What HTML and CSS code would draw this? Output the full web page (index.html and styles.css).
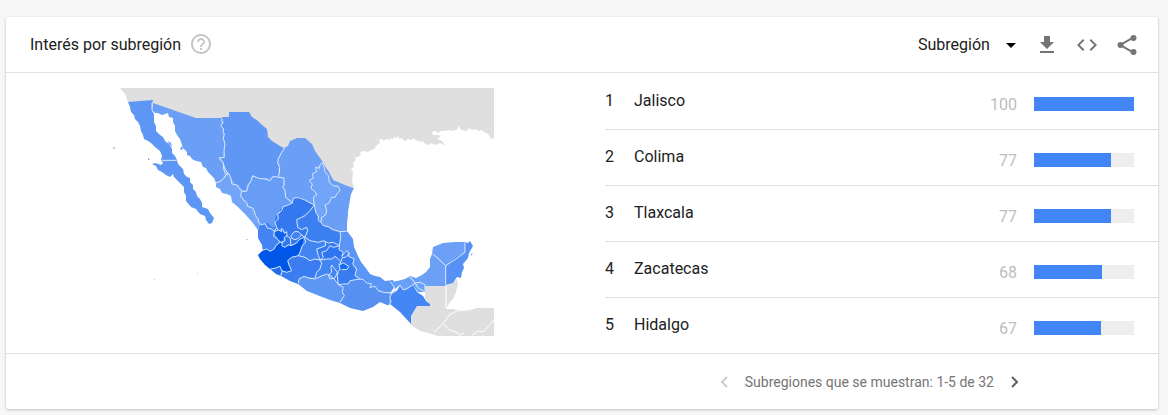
FILE: index.html
```
<!DOCTYPE html>
<html lang="es">
  <head>
    <meta charset="UTF-8" />
    <meta name="viewport" content="width=device-width, initial-scale=1.0" />
    <title>Interés por subregión</title>
    <link rel="stylesheet" href="styles.css">
  </head>
  <body>
    <section class="card">
      <header class="card-header">
        <h2 class="title">Interés por subregión</h2>
        <button class="icon-button help" aria-label="Ayuda">
          <svg viewBox="0 0 24 24" width="24" height="24" fill="currentColor">
            <path d="M11 18h2v-2h-2v2zm1-16C6.480 2 2 6.480 2 12s4.480 10 10 10 10-4.480 10-10S17.520 2 12 2zm0 18c-4.410 0-8-3.590-8-8s3.590-8 8-8 8 3.590 8 8-3.590 8-8 8zm0-14c-2.210 0-4 1.790-4 4h2c0-1.100.9-2 2-2s2 .9 2 2c0 2-3 1.750-3 5h2c0-2.250 3-2.500 3-5 0-2.210-1.790-4-4-4z" />
          </svg>
        </button>
        <div class="actions">
          <div class="resolution">
            <select class="resolution-select" aria-label="Resolución">
              <option>Subregión</option>
              <option>Ciudad</option>
            </select>
            <svg class="resolution-arrow" viewBox="0 0 10 5" width="10" height="5"><path d="M0 0h10L5 5z" /></svg>
          </div>
          <button class="icon-button" aria-label="Descargar CSV">
            <svg viewBox="0 0 24 24" width="24" height="24" fill="currentColor">
              <path d="M19 9h-4V3H9v6H5l7 7 7-7zM5 18v2h14v-2H5z" />
            </svg>
          </button>
          <button class="icon-button" aria-label="Insertar">
            <svg viewBox="0 0 24 24" width="24" height="24" fill="currentColor">
              <path d="M9.400 16.600L4.800 12l4.600-4.600L8 6l-6 6 6 6 1.400-1.400zm5.200 0l4.600-4.600-4.600-4.600L16 6l6 6-6 6-1.400-1.400z" />
            </svg>
          </button>
          <button class="icon-button" aria-label="Compartir">
            <svg viewBox="0 0 24 24" width="24" height="24" fill="currentColor">
              <path d="M4.500 11.200L18 3.600l1 1.700L7.200 12 19 18.700l-1 1.700L4.500 12.800z" />
              <circle cx="5.500" cy="12" r="3" />
              <circle cx="18.500" cy="5" r="3" />
              <circle cx="18.500" cy="19" r="3" />
            </svg>
          </button>
        </div>
      </header>

      <div class="content">
        <div class="map">
          <svg class="map-svg" viewBox="112 89 382 248" role="img" aria-label="Mapa de México">
            <!-- neighbours -->
            <g class="land">
              <path d="M120 89H494V140L490 139 489 136 487 134 485 134 482 131 479 132 475 130 472 131 469 129 467 132 462 131 460 130 459 126 457 131 450 132 449 131 445 132 441 132 438 134 435 132 432 133 433 136 439 136 440 138 437 140 442 142 444 145 446 147 440 144 435 146 431 144 429 146 425 145 423 142 420 143 418 141 416 142 414 139 411 141 408 140 405 142 401 139 398 140 399 137 396 139 394 138 392 141 391 138 390 141 386 140 384 142 382 140 379 141 380 144 377 146 374 150 367 153 364 152 360 153 361 156 358 158 355 158 356 161 353 164 354 168 351 170 353 173 352 183 354 188 340 190 280 152 222 122 190 121 153 106 128 103 125 95z" />
              <path d="M411 326L411 317 417 307 430 305 425 300 425 287H446L453 284 457 280 458 285 456 293 453 300 450 303 446 310 453 310 462 312 470 311 477 309H494V337H438L428 334 420 332z" />
            </g>
            <path class="frontier" d="M446 287V309M459 311L449 316 446 321 440 328 434 333M444 325L449 331 456 333 460 336 464 334M472 336L478 332 483 333 488 328 494 321" />

            <!-- states -->
            <g class="states">
              <path fill="#4c8bf3" d="M260 226L300 195 318 205 345 230 363 270 385 290 345 300 300 284 266 262z" />
              <path fill="#6b9ff6" d="M300 145L308 144 322 162 333 181 352 189 345 230 318 222z" />
              <path fill="#5d96f4" d="M128 103L153 101 152 105 152 112 154 115 154 123 156 127 156 132 160 136 163 138 165 142 169 145 172 150 172 154 175 157 177 161H161L162 157 160 152 155 148 151 144 148 142 144 140 143 136 141 132 140 127 138 123 135 120 134 116 131 113 130 108z" />
              <path fill="#5d96f4" d="M161 161H177L178 165 183 170 184 175 187 178 190 179 190 183 193 186 193 190 196 193 197 197 200 200 202 204 202 208 208 210 210 214 214 219 212 224 209 225 206 221 205 217 200 215 196 210 191 208 186 202 186 197 184 193 184 188 179 183 174 178 173 175 170 178 166 176 162 173 158 171 156 167 152 165 155 164 161 166 163 164z" />
              <path fill="#6b9ff6" d="M153 104L196 119H222L221 127 224 130 223 138 225 145 225 152 223 158 220 159 223 162 224 169 227 174 223 180 216 184 214 179 208 173 206 169 203 168 201 163 196 162 192 160 190 157 187 156 187 153 183 149 180 140 177 136 175 132 175 127 173 123 173 119 169 118 168 114 162 116 158 114 155 114 152 111z" />
              <path fill="#6097f4" d="M222 118H229V113H249L252 118 258 122 262 126 267 130 268 138 272 142 280 147 284 149 281 155 278 161 280 166 278 172 278 177 273 177 270 180 262 179 257 179 252 177 251 182 248 185 246 189 247 192 242 191 238 186 234 185 231 179 228 174 225 169 223 162 220 159 223 158 225 152 225 145 223 138 224 130 221 127z" />
              <path fill="#6b9ff6" d="M284 149L288 147 290 142 297 139H305L312 145 315 152 322 162 320 165 316 167 317 171 314 173 315 178 310 180 311 186 314 189 316 192 314 197 314 205 308 203 304 200 297 198 292 202 285 198 286 192 283 187 284 180 278 177 278 172 280 166 278 161 281 155z" />
              <path fill="#72a4f7" d="M320 165L323 167 326 175 328 181 332 185 338 187 338 192 334 195 334 199 329 200 325 204 328 208 327 213 323 217 322 227 318 220 316 212 314 205 313 197 315 192 314 189 311 186 310 180 315 178 314 173 317 171 316 167z" />
              <path fill="#6b9ff6" d="M322 162L325 168 329 173 333 181 338 186 346 187 354 189 352 193 350 197 348 205 348 215 347 225 347 233 340 233 332 231 329 229 321 225 323 217 327 213 328 208 325 204 329 200 334 199 334 195 338 192 338 187 332 185 328 181 326 175 323 167z" />
              <path fill="#72a4f7" d="M216 184L223 180 228 174 231 179 234 185 238 186 242 191 240 198 243 201 247 207 251 208 254 217 258 221 260 225 258 231 252 223 245 215 238 208 232 203 231 197 227 195 222 194 220 190 216 188z" />
              <path fill="#689df6" d="M242 191L247 192 246 189 248 185 251 182 252 177 257 179 262 179 270 180 273 177 278 177 284 180 283 187 286 192 285 198 292 202 289 207 280 210 280 214 276 217 275 223 276 228 272 228 268 224 260 225 258 221 254 217 251 208 247 207 243 201 240 198z" />
              <path fill="#4384f2" d="M260 225L268 224 272 228 274 233 275 238 280 240 284 244 280 248 270 252 263 253 262 246 258 239 258 231z" />
              <path fill="#3478ef" d="M275 233L275 223 276 217 280 214 280 210 286 207 292 204 293 199 300 198 308 203 314 206 308 213 298 220 297 229 303 230 307 229 306 238 298 240 294 245 288 249 280 246 282 235z" />
              <path fill="#3c7ff1" d="M314 206L316 213 318 218 322 225 329 229 332 232 340 233 341 240 339 247 332 245 326 243 321 244 315 242 304 239 307 230 297 228 297 221 305 216z" />
              <path fill="#4083f1" d="M291 237L294 233 298 233 302 236 298 239 292 240z" />
              <path fill="#0057e7" d="M258 256L263 251 267 250 270 252 274 250 276 247 280 243 283 246 285 248 291 247 297 243 300 239 304 238 305 243 302 247 300 253 298 257 292 258 288 262 289 267 292 272 287 273 282 272 280 267 275 269 270 270 265 266 260 260z" />
              <path fill="#0f62ea" d="M274 233L278 231 282 233 287 234 285 238 282 242 278 241z" />
              <path fill="#216ced" d="M270 270L275 269 280 267 282 272 281 277 276 275z" />
              <path fill="#4284f2" d="M304 238L315 242 325 242 326 247 317 250 318 257 320 261 315 260 310 262 305 259 298 257 300 253 302 247z" />
              <path fill="#3479ef" d="M325 242L333 244 339 247 330 247 327 252 322 253 323 258 320 261 318 257 317 250 326 247z" />
              <path fill="#2f75ef" d="M327 252L330 247 339 246 339 251 343 253 346 253 342 258 341 263 335 257 332 260 320 261 323 258 322 253z" />
              <path fill="#3b7df0" d="M298 257L305 259 310 262 315 260 320 261 322 264 320 270 317 273 315 279 308 279 304 277 299 280 298 285 290 282 281 277 282 272 287 273 292 272 288 262 292 258z" />
              <path fill="#4385f2" d="M320 261L332 260 335 257 341 263 340 268 338 272 338 275 335 279 332 277 327 275 315 279 317 273 320 270 322 264z" />
              <path fill="#397cf0" d="M342 258L346 253 350 258 355 260 353 267 357 272 355 277 360 280 350 282 348 285 338 286 332 278 337 275 338 272z" />
              <path fill="#176aed" d="M339 266L343 264 349 267 347 271 342 271z" />
              <path fill="#5b95f5" d="M341 233L347 232 353 240 354 248 358 257 361 263 365 268 370 275 375 277 380 278 385 282 393 281 395 287 391 293 386 294 380 292 376 290 373 290 373 286 368 284 366 281 359 280 355 277 357 272 353 267 355 260 350 258 347 253 341 252 339 247z" />
              <path fill="#5e96f4" d="M298 285L299 280 304 277 315 279 327 275 332 278 338 286 343 288 342 293 344 297 340 304 330 301 317 296 307 292z" />
              <path fill="#5790f0" d="M338 286L348 285 350 282 360 280 363 281 367 284 372 285 370 288 375 287 378 292 383 293 391 294 389 299 390 306 387 306 380 303 373 308 363 312 350 309 340 304 344 297 342 293 343 288z" />
              <path fill="#4486f4" d="M391 294L397 291 400 286 403 291 413 286 417 293 423 297 426 302 430 305 430 307H417L414 312 411 317 411 325 400 313 390 305 389 299z" />
              <path fill="#68a0f7" d="M390 283L397 282 405 280 410 277 413 280 414 284 419 286 425 286V293H418L413 286 403 291 400 286 395 290z" />
              <path fill="#6ca0f7" d="M410 277L416 279 422 276 426 273 430 268 430 260 432 255 438 260 446 267V287H425L419 286 414 284 413 280z" />
              <path fill="#6ca0f7" d="M432 255L433 248 443 244 455 243 465 243 465 253 458 256 452 260 446 267 438 260z" />
              <path fill="#5891f5" d="M465 243L468 244 470 242 473 247 469 254 468 259 463 265 464 269 462 273 461 279 457 278 453 284 446 286V267L452 260 458 256 465 253z" />
            </g>

            <!-- state lines, drawn on a grid three times finer -->
            <g class="state-lines" transform="translate(105 80) scale(.33333)">
              <path d="M141 72V94M170 244H215M352 118L350 125 355 129 347 140 356 150 354 157 358 165 355 178 360 195 357 215 358 235 342 237 350 247 356 255 355 268 362 286" />
              <path d="M332 312L345 308 355 300 362 288 372 284 378 300 381 315 395 318 402 328 410 337 425 337 430 318 437 308 443 290 460 298 480 300 495 305 505 292 520 295 537 297" />
              <path d="M539 207L530 220 520 238 518 252 524 265 523 282 520 293M537 297L537 318 533 325 540 335 542 355 555 366 562 372 565 357 580 356 598 362 612 370 628 378" />
              <path d="M410 337L407 350 415 362 425 370 428 382 445 388 452 410 460 420 460 430 468 437 480 434 487 447 500 450 508 458M562 372L545 380 535 382 530 395 518 405 520 420 510 430 515 445 508 458" />
              <path d="M652 250L645 258 643 268 632 265 635 278 622 285 625 297 612 305 622 315 618 328 632 340 635 348 625 355 628 378 632 400 640 412 640 425 648 430" />
              <path d="M652 250L658 268 660 278 670 290 673 310 685 320 700 322 705 335 695 345 690 355 680 355 672 372 660 378 665 395 662 408 650 415 648 430 655 440 670 443 685 452 705 458 725 457" />
              <path d="M628 378L615 395 600 410 590 415 575 422 578 445 590 452 605 445 608 455 600 475 615 485 640 490 655 485 670 492 685 490 703 500 707 475 705 458" />
              <path d="M470 515L485 510 495 517 508 510 512 500 525 490 533 490 530 500 540 505 550 497 558 500 575 492 585 480 598 475 602 490 592 500 585 520 580 530 560 535 548 545 553 560 560 575 545 580 530 575 525 562 510 568 497 570M532 575L527 590" />
              <path d="M508 458L520 453 515 445M520 453L530 458 528 449 535 452 538 463 545 458 546 470 538 475 540 485 530 490M508 458L506 472 516 478 525 490M545 470L556 478 558 500M558 470L568 458 580 458 590 468 580 478 570 482 560 478zM590 468L600 475" />
              <path d="M580 530L600 535 615 545 630 540 645 543M660 487L662 500 650 505 635 510 640 530 645 543 655 535 650 520 665 515 675 500 685 505 703 500 702 512 715 520 710 532 725 515 733 522 722 535 712 535 708 548M645 543L665 540 680 540 690 532 700 540 708 548" />
              <path d="M645 543L650 552 645 570 635 580 630 597M580 612L582 600 597 592 610 597 630 600 645 593 665 585 680 592 690 603 700 617" />
              <path d="M708 548L702 558 705 572 700 577 697 590 700 617 715 615 730 615 735 605 765 600M702 558L715 552 732 562 725 572 710 572M733 522L730 532 748 540 743 555 755 570 750 590 765 600M680 558L688 568 697 580 690 597 675 600 670 588 680 580 678 565z" />
              <path d="M700 617L715 625 712 640 718 650 705 670M765 600L775 602 785 612 800 615 795 625 810 622 820 635 835 640 862 643" />
              <path d="M855 607L865 620 870 632 860 643 855 655 858 670 850 680M860 643L875 635 885 618 895 633 905 630 920 620 930 612 940 628 958 637M910 593L920 600 930 612 945 610 960 617V637" />
              <path d="M985 525L1022 560 1050 542 1080 520V490M1022 560V620" />
            </g>

            <!-- islands -->
            <path fill="#6b9ff6" d="M180 150L182 147 183 150 181 151zM168 142L171 144 172 148 169 145zM148 159L150 161 148 161zM471 255L473 254 471 257z" />
            <path fill="#c4cbd6" d="M113 148H115V150H113zM197 274H198V275H197zM246 240H248V241H246zM154 280H155V281H154z" />
          </svg>
        </div>

        <ol class="list">
          <li class="row">
            <span class="rank">1</span>
            <span class="name">Jalisco</span>
            <span class="value">100</span>
            <div class="bar"><div class="bar-fill" style="width: 100%"></div></div>
          </li>
          <li class="row">
            <span class="rank">2</span>
            <span class="name">Colima</span>
            <span class="value">77</span>
            <div class="bar"><div class="bar-fill" style="width: 77%"></div></div>
          </li>
          <li class="row">
            <span class="rank">3</span>
            <span class="name">Tlaxcala</span>
            <span class="value">77</span>
            <div class="bar"><div class="bar-fill" style="width: 77%"></div></div>
          </li>
          <li class="row">
            <span class="rank">4</span>
            <span class="name">Zacatecas</span>
            <span class="value">68</span>
            <div class="bar"><div class="bar-fill" style="width: 68%"></div></div>
          </li>
          <li class="row">
            <span class="rank">5</span>
            <span class="name">Hidalgo</span>
            <span class="value">67</span>
            <div class="bar"><div class="bar-fill" style="width: 67%"></div></div>
          </li>
        </ol>
      </div>

      <footer class="card-footer">
        <nav class="pagination">
          <button class="page-button" aria-label="Anterior" disabled>
            <svg viewBox="0 0 8 12" width="8" height="12"><path d="M7 1L2 6l5 5" /></svg>
          </button>
          <span class="page-text">Subregiones que se muestran: 1-5 de 32</span>
          <button class="page-button" aria-label="Siguiente">
            <svg viewBox="0 0 8 12" width="8" height="12"><path d="M1 1l5 5-5 5" /></svg>
          </button>
        </nav>
      </footer>
    </section>
  </body>
</html>
```

FILE: styles.css
```
:root {
  --color-bar: #4285f4;
  --color-line: #e0e0e0;
  --color-text: #212121;
  --color-muted: #757575;
}
*,
*::before,
*::after {
  box-sizing: border-box;
}
body {
  margin: 0;
  padding: 17px 10px 6px 6px;
  background-color: #f7f7f7;
  color: var(--color-text);
  font-family: Roboto, Arial, sans-serif;
  font-size: 16px;
  line-height: 24px;
}
button {
  border: 0;
  padding: 0;
  background: transparent;
  color: var(--color-muted);
  cursor: pointer;
}
svg {
  display: block;
}
.card {
  background-color: #fff;
  border-radius: 2px;
  box-shadow: 0 1px 3px rgba(0, 0, 0, 0.24);
}
.card-header {
  display: flex;
  align-items: center;
  height: 56px;
  padding-inline: 24px 19px;
  border-bottom: 1px solid var(--color-line);
}
.title {
  margin: 0;
  font-size: 16px;
  font-weight: 400;
}
.help {
  margin-left: 8px;
  padding-bottom: 2px;
  color: #c6c6c6;
}
.actions {
  display: flex;
  align-items: center;
  gap: 16px;
  margin-left: auto;
}
.resolution {
  position: relative;
}
.resolution-select {
  appearance: none;
  width: 101px;
  border: 0;
  padding: 0;
  background: transparent;
  color: inherit;
  font: inherit;
}
.resolution-arrow {
  position: absolute;
  top: 10px;
  right: 3px;
  pointer-events: none;
}

.content {
  display: grid;
  grid-template-columns: 52% 48%;
}
.map {
  display: flex;
  justify-content: center;
  align-items: center;
  padding: 0 5px 2px 0;
}
.map-svg {
  width: 382px;
  max-width: 100%;
}
.land {
  fill: #dfdfdf;
}
.frontier {
  fill: none;
  stroke: #fff;
}
.state-lines {
  fill: none;
  stroke: #d8e8fd;
  stroke-width: 3px;
  stroke-linejoin: round;
}
.list {
  margin: 0;
  padding: 0;
  list-style: none;
}
.row {
  display: flex;
  align-items: center;
  height: 56px;
  padding: 0 24px 2px 0;
  border-top: 1px solid var(--color-line);

  &:first-child {
    border-top-color: transparent;
  }
}
.rank {
  width: 29px;
}
.name {
  flex: 1;
}
.value {
  margin-right: 17px;
  padding-top: 8px;
  color: #bdbdbd;
}
.bar {
  width: 100px;
  height: 14px;
  margin-top: 6px;
  background-color: #eee;
}
.bar-fill {
  height: 100%;
  background-color: var(--color-bar);
}

.card-footer {
  display: flex;
  justify-content: flex-end;
  height: 56px;
  padding-right: 139px;
  border-top: 1px solid var(--color-line);
}
.pagination {
  display: flex;
  align-items: center;
  gap: 17px;
}
.page-text {
  color: var(--color-muted);
  font-size: 14px;
}
.page-button {
  & path {
    fill: none;
    stroke: #616161;
    stroke-width: 2px;
  }
  &:disabled path {
    stroke: #ccc;
  }
}
```
